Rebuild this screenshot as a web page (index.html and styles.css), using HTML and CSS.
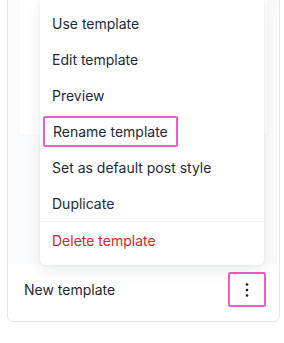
FILE: index.html
```html
<!DOCTYPE html>
<html lang="en">
<head>
  <meta charset="UTF-8" />
  <meta name="viewport" content="width=device-width, initial-scale=1.0" />
  <title>Templates</title>
  <link rel="stylesheet" href="styles.css">
</head>
<body>
  <div class="card">
    <div class="preview">
      <div class="page"></div>
    </div>

    <!-- dropdown opened from the kebab button -->
    <ul class="menu">
      <li class="item">Use template</li>
      <li class="item">Edit template</li>
      <li class="item">Preview</li>
      <li class="item"><span class="mark">Rename template</span></li>
      <li class="item">Set as default post style</li>
      <li class="item">Duplicate</li>
      <li class="item danger">Delete template</li>
    </ul>

    <div class="footer">
      <span class="name">New template</span>
      <button class="more" aria-label="More">
        <svg width="4" height="16" viewBox="0 0 4 16">
          <circle cx="2" cy="2.5" r="1.3" fill="#111827" />
          <circle cx="2" cy="8" r="1.3" fill="#111827" />
          <circle cx="2" cy="13.5" r="1.3" fill="#111827" />
        </svg>
      </button>
    </div>
  </div>
</body>
</html>
```

FILE: styles.css
```css
body {
  font-family: 'Inter', 'Liberation Sans', sans-serif;
  margin: 0;
  padding: 0 4px 0 7px;
  background: #fff;
  color: #1f2937;
}

.card {
  position: relative;
  margin-top: -11px;
  border: 1px solid #e5e7eb;
  border-radius: 6px;
  background: #fff;
}

.preview {
  background: #f9fafb;
  padding: 0 12px;
  height: 274px;
  border-radius: 5px 5px 0 0;
}

.page {
  height: 144px;
  background: #fff;
}

.menu {
  position: absolute;
  top: 7px;
  left: 32px;
  width: 224px;
  margin: 0;
  padding: 8px 0 7px;
  list-style: none;
  background: #fff;
  border-radius: 6px;
  box-shadow: 0 6px 16px rgba(17, 24, 39, 0.08), 0 1px 3px rgba(17, 24, 39, 0.05);
  z-index: 10;
}

.item {
  height: 36px;
  display: flex;
  align-items: center;
  padding: 0 12px;
  font-size: 14px;
  color: #1f2937;
}

.item.danger {
  color: #dc2626;
  border-top: 1px solid #f3f4f6;
}

.mark {
  margin-left: -9px;
  padding: 5px 8px;
  border: 2px solid #f45bc6;
  border-radius: 2px;
}

.footer {
  display: flex;
  align-items: center;
  justify-content: space-between;
  padding: 8px 13px 14px 16px;
}

.name {
  font-size: 14px;
  color: #1f2937;
}

.more {
  width: 38px;
  height: 35px;
  display: flex;
  align-items: center;
  justify-content: center;
  padding: 0;
  background: #fff;
  border: 2px solid #f45bc6;
  border-radius: 2px;
  cursor: pointer;
}
```
